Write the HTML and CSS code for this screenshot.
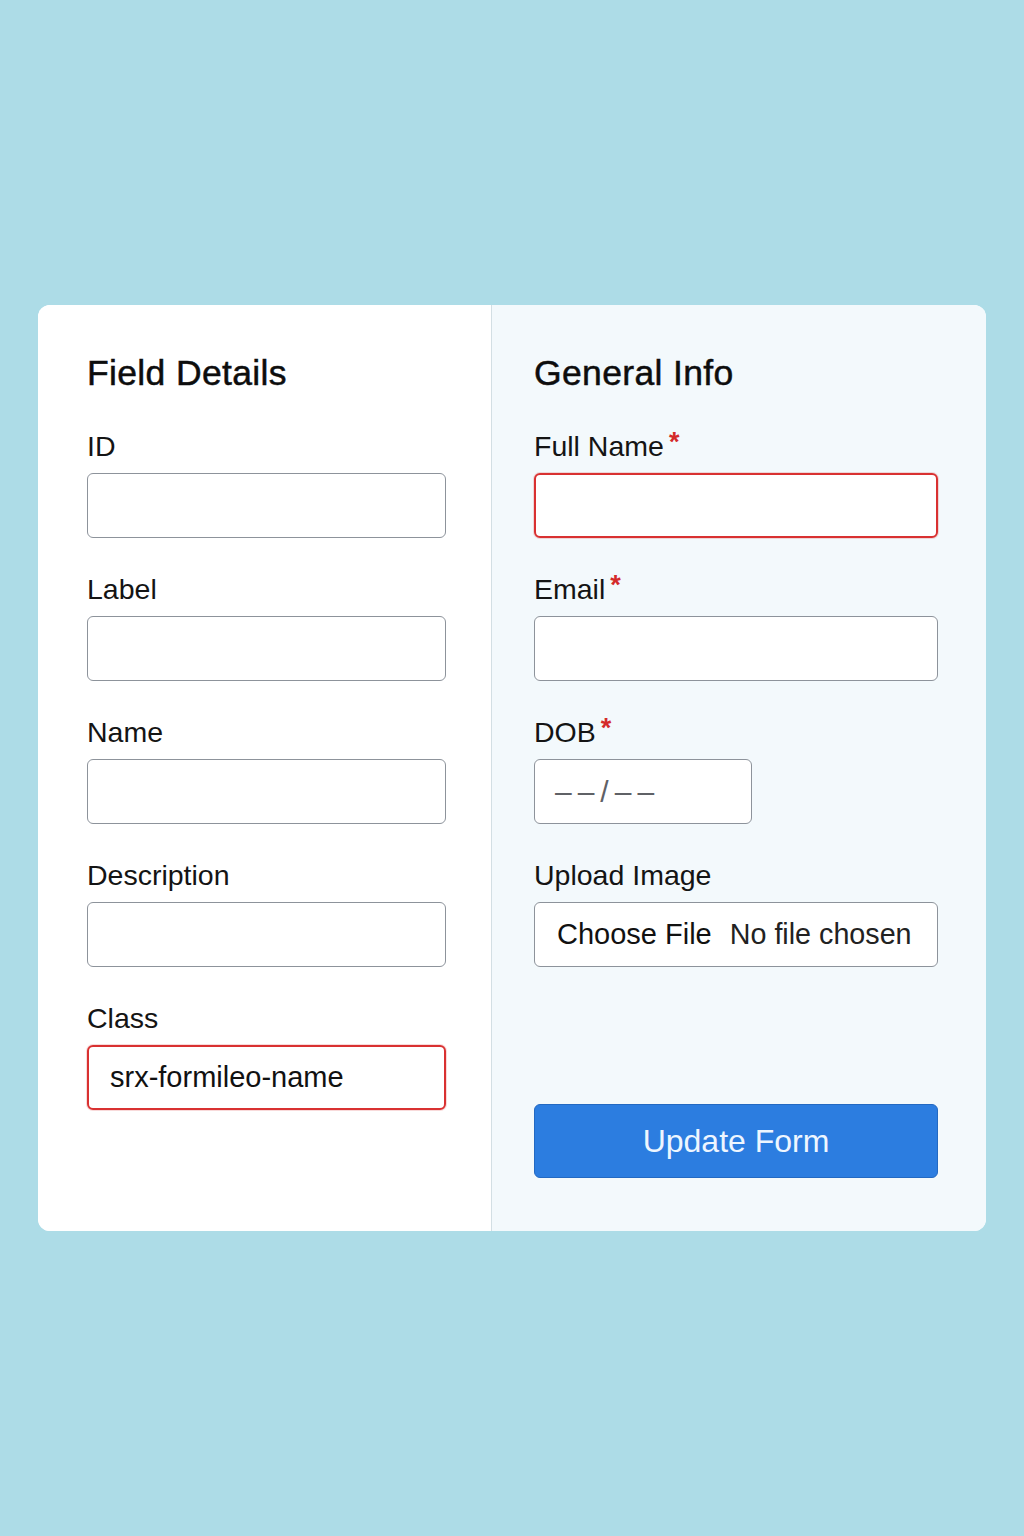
FILE: index.html
```html
<!DOCTYPE html>
<html lang="en">
<head>
<meta charset="utf-8">
<title>Form Builder</title>
<link rel="stylesheet" href="styles.css">
</head>
<body>
<div class="page">
  <div class="card">
    <section class="panel panel-left">
      <h2 class="title">Field Details</h2>
      <div class="field">
        <label class="label">ID</label>
        <div class="input"></div>
      </div>
      <div class="field">
        <label class="label">Label</label>
        <div class="input"></div>
      </div>
      <div class="field">
        <label class="label">Name</label>
        <div class="input"></div>
      </div>
      <div class="field">
        <label class="label">Description</label>
        <div class="input"></div>
      </div>
      <div class="field">
        <label class="label">Class</label>
        <div class="input input-error"><span class="value">srx-formileo-name</span></div>
      </div>
    </section>
    <section class="panel panel-right">
      <h2 class="title">General Info</h2>
      <div class="field">
        <label class="label">Full Name<span class="req">*</span></label>
        <div class="input input-error"></div>
      </div>
      <div class="field">
        <label class="label">Email<span class="req">*</span></label>
        <div class="input"></div>
      </div>
      <div class="field">
        <label class="label">DOB<span class="req">*</span></label>
        <div class="input input-date"><span class="placeholder">––/––</span></div>
      </div>
      <div class="field">
        <label class="label">Upload Image</label>
        <div class="input input-file"><span class="file-btn">Choose File</span><span class="file-name">No file chosen</span></div>
      </div>
      <button class="submit" type="button">Update Form</button>
    </section>
  </div>
</div>
</body>
</html>
```
FILE: styles.css
```css
html, body {
  margin: 0;
  padding: 0;
  background: #addce7;
}
body {
  font-family: "Liberation Sans", Arial, sans-serif;
  color: #111;
  min-height: 1536px;
}
.page {
  padding: 305px 38px 0;
}
.card {
  display: flex;
  width: 948px;
  border-radius: 12px;
  overflow: hidden;
  background: #ffffff;
}
.panel {
  display: flex;
  flex-direction: column;
  gap: 36px;
  box-sizing: border-box;
}
.panel-left {
  width: 454px;
  padding: 48px 45px 121px 49px;
  background: #ffffff;
  border-right: 1px solid #d3dfe4;
}
.panel-right {
  flex: 1;
  padding: 48px 48px 53px 42px;
  background: #f3f9fc;
}
.title {
  margin: 0 0 2px;
  font-size: 35.5px;
  line-height: 40px;
  font-weight: 400;
  -webkit-text-stroke: 0.5px #0d0d0d;
  font-family: "Liberation Sans", Arial, sans-serif;
  letter-spacing: 0.35px;
  color: #0d0d0d;
}
.field {
  display: flex;
  flex-direction: column;
  gap: 12px;
}
.label {
  height: 30px;
  font-size: 28.5px;
  line-height: 30px;
  color: #141414;
}
.req {
  color: #d42a2a;
  font-weight: 700;
  margin-left: 5px;
  font-size: 27px;
  line-height: 0;
  vertical-align: 5px;
}
.input {
  box-sizing: border-box;
  height: 65px;
  border: 1px solid #8d939b;
  border-radius: 6px;
  background: #ffffff;
  display: flex;
  align-items: center;
  padding: 0 22px;
}
.input-error {
  border: 2px solid #d93131;
  box-shadow: 0 0 0 1px rgba(217, 49, 49, 0.18);
  padding: 0 21px;
}
.value {
  font-size: 29px;
  color: #111;
}
.input-date {
  width: 218px;
  padding-left: 20px;
}
.placeholder {
  font-size: 30px;
  color: #5f6166;
  letter-spacing: 6px;
}
.input-file {
  padding: 0 22px;
  gap: 18px;
}
.file-btn {
  font-size: 29px;
  color: #111;
}
.file-name {
  font-size: 28.7px;
  color: #222;
}
.submit {
  margin-top: auto;
  height: 74px;
  border: 1px solid #2369c2;
  border-radius: 6px;
  background: #2c7de0;
  color: #eef6ff;
  font-family: "Liberation Sans", Arial, sans-serif;
  font-size: 32px;
  cursor: pointer;
}
```
